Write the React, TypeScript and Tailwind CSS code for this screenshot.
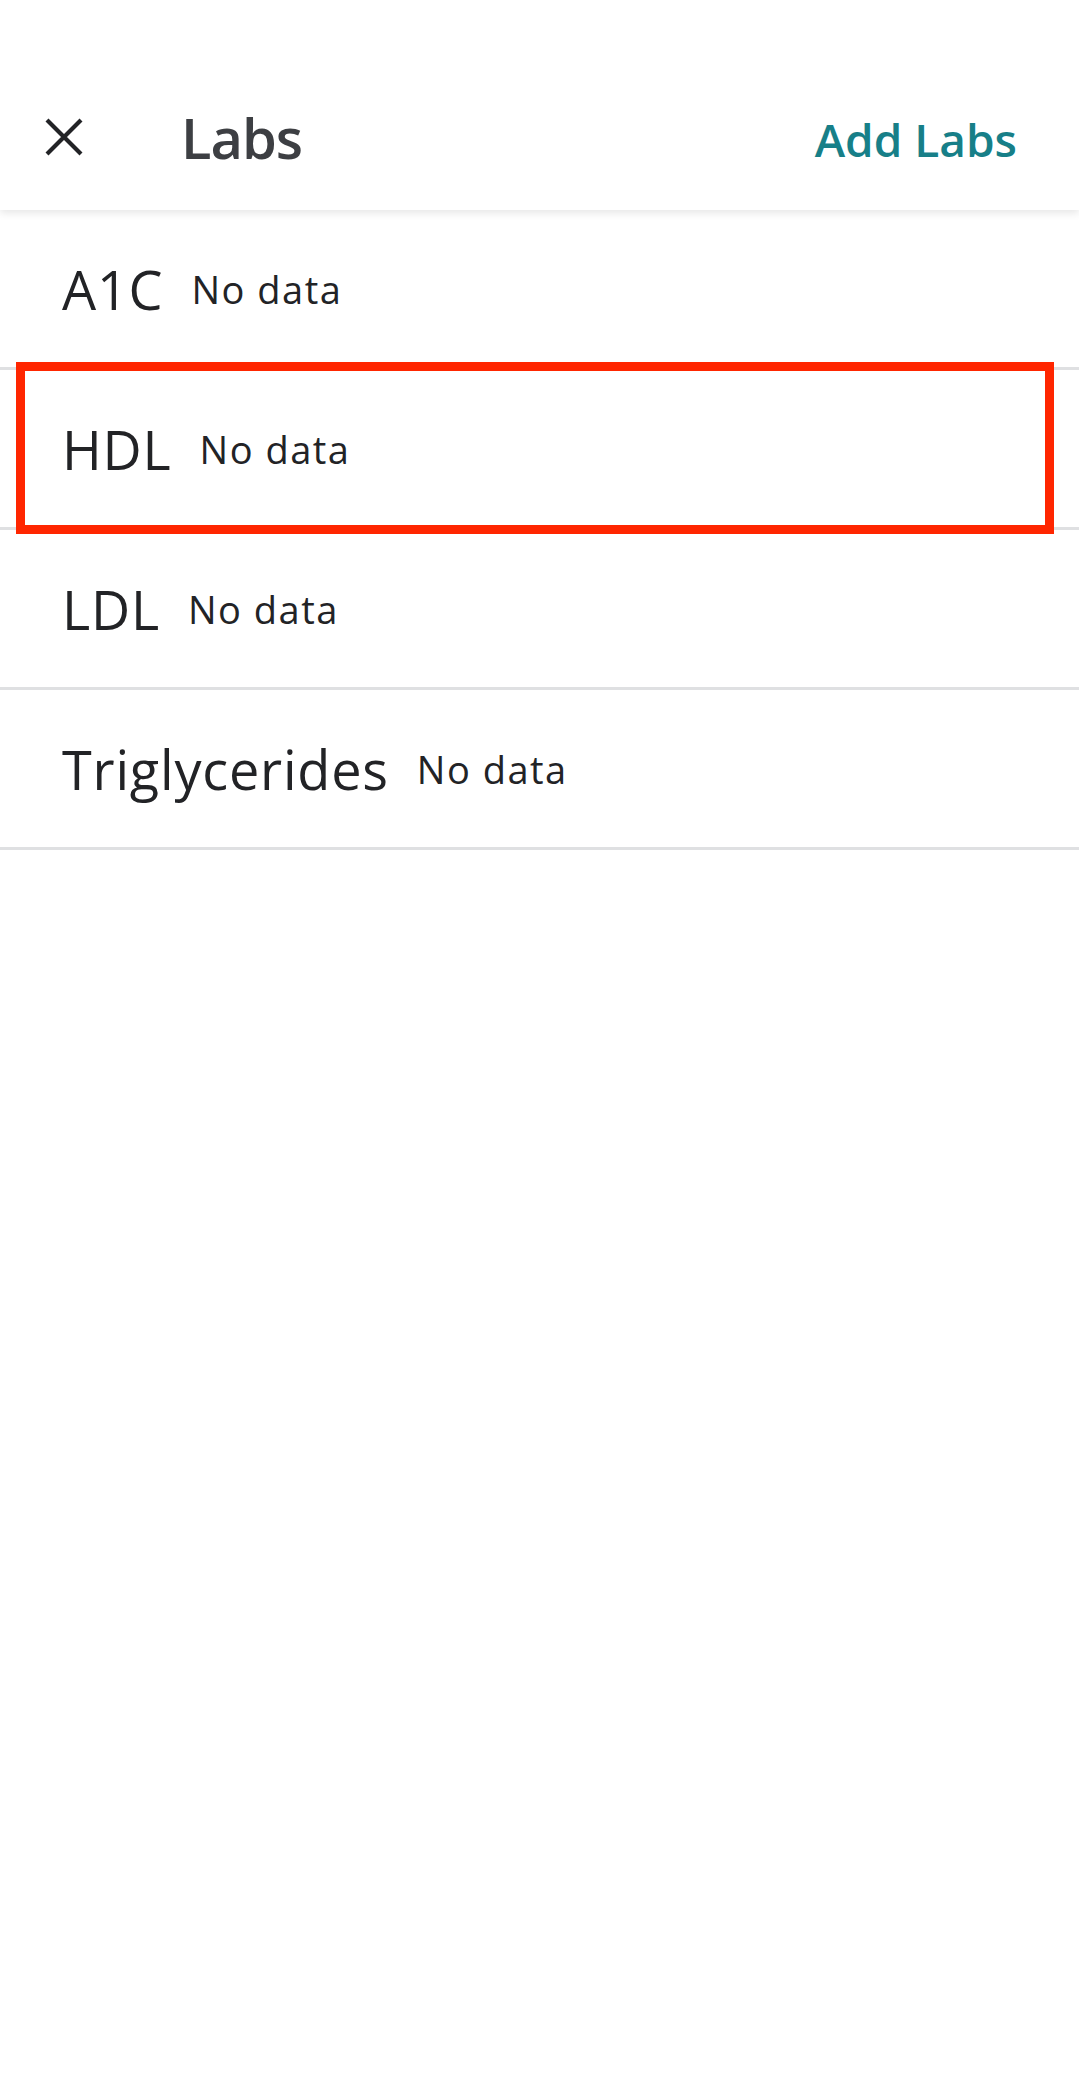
import React from "react";

const rows = ["A1C", "HDL", "LDL", "Triglycerides"];

export default function App() {
  return (
    <div
      className="relative w-[1079px] h-[2087px] bg-white overflow-hidden"
      style={{ fontFamily: '"Open Sans", "Liberation Sans", sans-serif' }}
    >
      <header className="relative z-10 bg-white pt-[63px] shadow-[0_3px_8px_rgba(0,0,0,0.10)]">
        <div className="flex h-[147px] items-center pl-[45px] pr-[62px]">
          <svg width="38" height="38" viewBox="0 0 38 38" className="shrink-0">
            <path d="M2 2 L36 36 M36 2 L2 36" stroke="#222326" strokeWidth="4.2" strokeLinecap="butt" fill="none" />
          </svg>
          <h1 className="ml-[98px] text-[56px] leading-none font-semibold tracking-[-1px] text-[#3d3f43]">Labs</h1>
          <button className="ml-auto mt-[4px] text-[46px] leading-none font-semibold text-[#177f88]">Add Labs</button>
        </div>
      </header>
      <ul>
        {rows.map((r) => (
          <li key={r} className="flex h-[160px] items-center gap-[28px] border-b-[3px] border-[#dfe0e2] pl-[62px]">
            <span className="text-[54px] leading-none tracking-[0.8px] text-[#222326]">{r}</span>
            <span className="text-[38px] leading-none tracking-[1.5px] text-[#222326]">No data</span>
          </li>
        ))}
      </ul>
      <div className="absolute left-[16px] top-[362px] h-[172px] w-[1038px] border-[9px] border-[#ff2600] z-20" />
    </div>
  );
}
